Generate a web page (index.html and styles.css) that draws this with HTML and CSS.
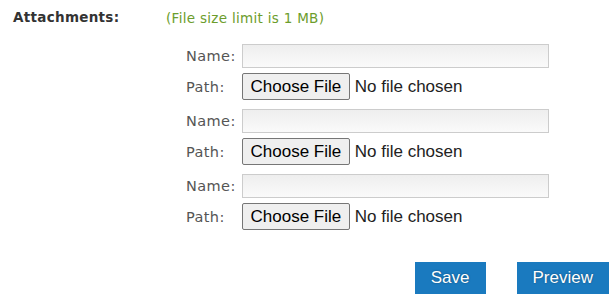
FILE: index.html
```html
<!DOCTYPE html>
<html lang="en">
<head>
    <meta charset="UTF-8">
    <title>Attachments</title>
    <link rel="stylesheet" href="styles.css">
</head>
<body>
    <div class="form-row">
        <div class="form-label">Attachments:</div>
        <div class="form-field">
            <div class="hint">(File size limit is 1 MB)</div>
            <div class="attachments">
                <div class="attachment">
                    <label class="att-label">Name:</label>
                    <input type="text" class="att-name">
                    <label class="att-label">Path:</label>
                    <input type="file" class="att-file">
                </div>
                <div class="attachment">
                    <label class="att-label">Name:</label>
                    <input type="text" class="att-name">
                    <label class="att-label">Path:</label>
                    <input type="file" class="att-file">
                </div>
                <div class="attachment">
                    <label class="att-label">Name:</label>
                    <input type="text" class="att-name">
                    <label class="att-label">Path:</label>
                    <input type="file" class="att-file">
                </div>
            </div>
        </div>
    </div>
    <div class="actions">
        <button class="btn">Save</button>
        <button class="btn">Preview</button>
    </div>
</body>
</html>
```

FILE: styles.css
```css
body {
    margin: 0;
    font-family: "DejaVu Sans", Verdana, sans-serif;
    background-color: #fff;
    color: #333;
    width: 610px;
}
.form-row {
    display: flex;
    padding: 9px 0 0 13px;
}
.form-label {
    width: 153px;
    font-size: 13.5px;
    font-weight: bold;
    color: #333;
    line-height: 16px;
    letter-spacing: 0.3px;
}
.form-field {
    flex: 1;
}
.hint {
    font-size: 13.5px;
    color: #6c9d2c;
    line-height: 18px;
    letter-spacing: 0.3px;
}
.attachments {
    margin: 17px 0 0 20px;
}
.attachment {
    display: grid;
    grid-template-columns: 56px 307px;
    row-gap: 5px;
    align-items: center;
    margin-bottom: 9px;
}
.att-label {
    font-size: 14.5px;
    color: #555;
    letter-spacing: 0.4px;
}
.att-name {
    box-sizing: border-box;
    width: 307px;
    height: 24px;
    margin: 0;
    border: 1px solid #ccc;
    background: linear-gradient(to bottom, #eee, #fafafa);
}
.att-file {
    margin: 0;
    font-family: "Liberation Sans", Arial, sans-serif;
    font-size: 17px;
    color: #222;
    height: 27px;
}
.att-file::file-selector-button {
    font-family: "Liberation Sans", Arial, sans-serif;
    font-size: 17px;
    height: 27px;
    padding: 0 7.5px;
    margin-right: 5px;
    background-color: #efefef;
    border: 1px solid #767676;
    border-radius: 2px;
    color: #000;
}
.actions {
    display: flex;
    justify-content: flex-end;
    gap: 31px;
    padding: 23px 1px 0 0;
}
.btn {
    height: 32px;
    padding: 0 16px;
    border: none;
    background-color: #1a7abf;
    color: #fff;
    font-family: "Liberation Sans", Arial, sans-serif;
    font-size: 17px;
    text-shadow: 0 0 2px rgba(0, 0, 0, 0.4);
    cursor: pointer;
}
```
